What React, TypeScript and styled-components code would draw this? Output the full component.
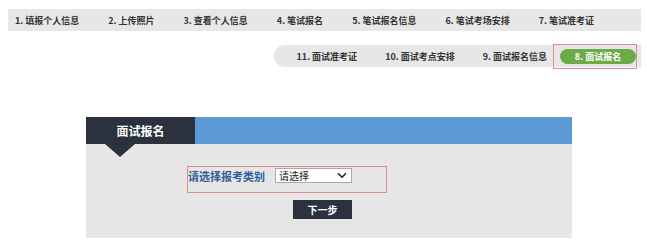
import React from 'react';
import styled, { createGlobalStyle } from 'styled-components';

const steps = [
  '1. 填报个人信息',
  '2. 上传照片',
  '3. 查看个人信息',
  '4. 笔试报名',
  '5. 笔试报名信息',
  '6. 笔试考场安排',
  '7. 笔试准考证',
];

const interviewSteps = ['11. 面试准考证', '10. 面试考点安排', '9. 面试报名信息'];

const GlobalStyle = createGlobalStyle`
  body {
    margin: 0;
    background: #fff;
    font-family: "Noto Sans CJK SC", "Liberation Sans", sans-serif;
  }
`;

const App: React.FC = () => {
  return (
    <Page>
      <GlobalStyle />
      <StepBar>
        {steps.map((s) => (
          <Step key={s}>{s}</Step>
        ))}
      </StepBar>
      <SubRow>
        <SubBar>
          {interviewSteps.map((s) => (
            <Step key={s}>{s}</Step>
          ))}
          <Highlight>
            <ActivePill>8. 面试报名</ActivePill>
          </Highlight>
        </SubBar>
      </SubRow>

      <Panel>
        <PanelHead>
          <Tab>面试报名</Tab>
          <HeadFill />
        </PanelHead>
        <PanelBody>
          <FormRow>
            <Label>请选择报考类别</Label>
            <SelectWrap>
              <Select defaultValue=''>
                <option value=''>请选择</option>
              </Select>
              <Chevron width='10' height='7' viewBox='0 0 10 7'>
                <path d='M1 1.2 L5 5.2 L9 1.2' fill='none' stroke='#222' strokeWidth='1.6' />
              </Chevron>
            </SelectWrap>
          </FormRow>
          <NextButton>下一步</NextButton>
        </PanelBody>
      </Panel>
    </Page>
  );
};

const Page = styled.div`
  width: 647px;
  height: 245px;
  overflow: hidden;
`;

const StepBar = styled.div`
  margin: 9px 6px 0 8px;
  height: 22px;
  background: #e7e7e7;
  display: flex;
  align-items: center;
  gap: 29px;
  padding-left: 7px;
`;

const Step = styled.span`
  font-size: 9px;
  font-weight: 700;
  color: #333;
  white-space: nowrap;
`;

const SubRow = styled.div`
  margin-top: 14px;
  display: flex;
  justify-content: flex-end;
  padding-right: 6px;
`;

const SubBar = styled.div`
  height: 22px;
  background: #e7e7e7;
  border-radius: 11px 0 0 11px;
  display: flex;
  align-items: center;
  gap: 28px;
  padding-left: 23px;
  padding-right: 4px;
`;

const Highlight = styled.div`
  margin-left: -22px;
  height: 23px;
  border: 1px solid #e28a88;
  display: flex;
  align-items: center;
  padding-left: 6px;
`;

const ActivePill = styled.div`
  width: 76px;
  height: 15px;
  border-radius: 8px;
  background: #6aab47;
  color: #fff;
  font-size: 9px;
  font-weight: 700;
  display: flex;
  align-items: center;
  justify-content: center;
  white-space: nowrap;
`;

const Panel = styled.div`
  margin: 50px 0 0 86px;
  width: 486px;
`;

const PanelHead = styled.div`
  display: flex;
  height: 27px;
`;

const Tab = styled.div`
  position: relative;
  width: 109px;
  background: #2c323d;
  color: #fff;
  font-size: 12px;
  font-weight: 700;
  display: flex;
  align-items: center;
  justify-content: center;
  &::after {
    content: '';
    position: absolute;
    left: 19px;
    top: 27px;
    border-left: 15px solid transparent;
    border-right: 15px solid transparent;
    border-top: 13px solid #2c323d;
  }
`;

const HeadFill = styled.div`
  flex: 1;
  background: #5b9ad5;
`;

const PanelBody = styled.div`
  height: 94px;
  background: #e6e6e6;
  padding-top: 22px;
  box-sizing: border-box;
`;

const FormRow = styled.div`
  margin-left: 101px;
  width: 200px;
  height: 27px;
  box-sizing: border-box;
  border: 1px solid #e28a88;
  display: flex;
  align-items: flex-start;
  padding-top: 1px;
`;

const Label = styled.span`
  font-size: 11px;
  line-height: 14px;
  font-weight: 700;
  color: #2f5f98;
  padding-top: 1px;
  width: 87px;
  white-space: nowrap;
`;

const SelectWrap = styled.div`
  position: relative;
  width: 77px;
  height: 15px;
`;

const Select = styled.select`
  display: block;
  appearance: none;
  width: 100%;
  height: 100%;
  box-sizing: border-box;
  border: 1px solid #a9a9a9;
  border-radius: 0;
  background: #fff;
  font-family: "Noto Sans CJK SC", sans-serif;
  font-size: 10px;
  color: #222;
  padding: 0 0 0 3px;
  line-height: 13px;
  outline: none;
`;

const Chevron = styled.svg`
  position: absolute;
  right: 5px;
  top: 4px;
  pointer-events: none;
`;

const NextButton = styled.button`
  display: block;
  margin: 7px 0 0 207px;
  width: 59px;
  height: 19px;
  border: none;
  background: #2c323d;
  color: #fff;
  font-family: "Noto Sans CJK SC", sans-serif;
  font-size: 10px;
  font-weight: 700;
  padding: 0;
`;

export default App;
